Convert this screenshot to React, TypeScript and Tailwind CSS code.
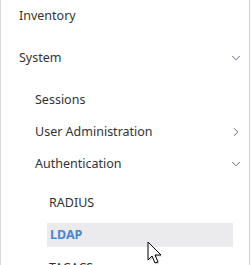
import { ChevronDown, ChevronRight } from "lucide-react";

function Row({ label, indent, chevron }: { label: string; indent: string; chevron?: "down" | "right" }) {
  return (
    <div className={`flex items-center justify-between ${indent} pr-[8px]`}>
      <span>{label}</span>
      {chevron === "down" && <ChevronDown className="size-[14px] text-[#4a5568]" strokeWidth={1.5} />}
      {chevron === "right" && <ChevronRight className="size-[14px] text-[#4a5568]" strokeWidth={1.5} />}
    </div>
  );
}

export default function App() {
  return (
    <div
      className="relative w-[251px] h-[265px] overflow-hidden bg-white border-l border-[#d9d9d9] text-[12.5px] text-[#333]"
      style={{ fontFamily: '"Noto Sans", "Open Sans", sans-serif' }}
    >
      <div className="absolute right-[1px] top-0 h-full w-px bg-[#cfcfcf]" />
      <div className="flex flex-col pt-[7px]">
        <div className="h-[18px] flex items-center pl-[18px]">Inventory</div>
        <div className="h-[24px]" />
        <div className="h-[18px]">
          <Row label="System" indent="pl-[18px]" chevron="down" />
        </div>
        <div className="h-[24px]" />
        <div className="h-[18px]">
          <Row label="Sessions" indent="pl-[34px]" />
        </div>
        <div className="h-[14px]" />
        <div className="h-[18px]">
          <Row label="User Administration" indent="pl-[34px]" chevron="right" />
        </div>
        <div className="h-[14px]" />
        <div className="h-[18px]">
          <Row label="Authentication" indent="pl-[34px]" chevron="down" />
        </div>
        <div className="h-[21px]" />
        <div className="h-[18px] flex items-center pl-[48px]">RADIUS</div>
        <div className="h-[11px]" />
        <div className="ml-[46px] mr-[18px] h-[24px] flex items-center pl-[3px] bg-[#ebebee] font-bold text-[#4a86d0]">
          LDAP
        </div>
        <div className="h-[12px]" />
        <div className="h-[18px] flex items-center pl-[48px]">TACACS</div>
      </div>
      <svg
        className="absolute left-[145px] top-[241px]"
        width="20"
        height="26"
        viewBox="0 0 20 26"
      >
        <path d="M2 1 L2 19 L6 15 L9 22 L12 21 L9 14 L15 14 Z" fill="#bbb" opacity="0.5" transform="translate(1.5,1.5)" />
        <path d="M2 1 L2 19 L6 15 L9 22 L12 21 L9 14 L15 14 Z" fill="#fff" stroke="#000" strokeWidth="1" strokeLinejoin="miter" />
      </svg>
    </div>
  );
}
